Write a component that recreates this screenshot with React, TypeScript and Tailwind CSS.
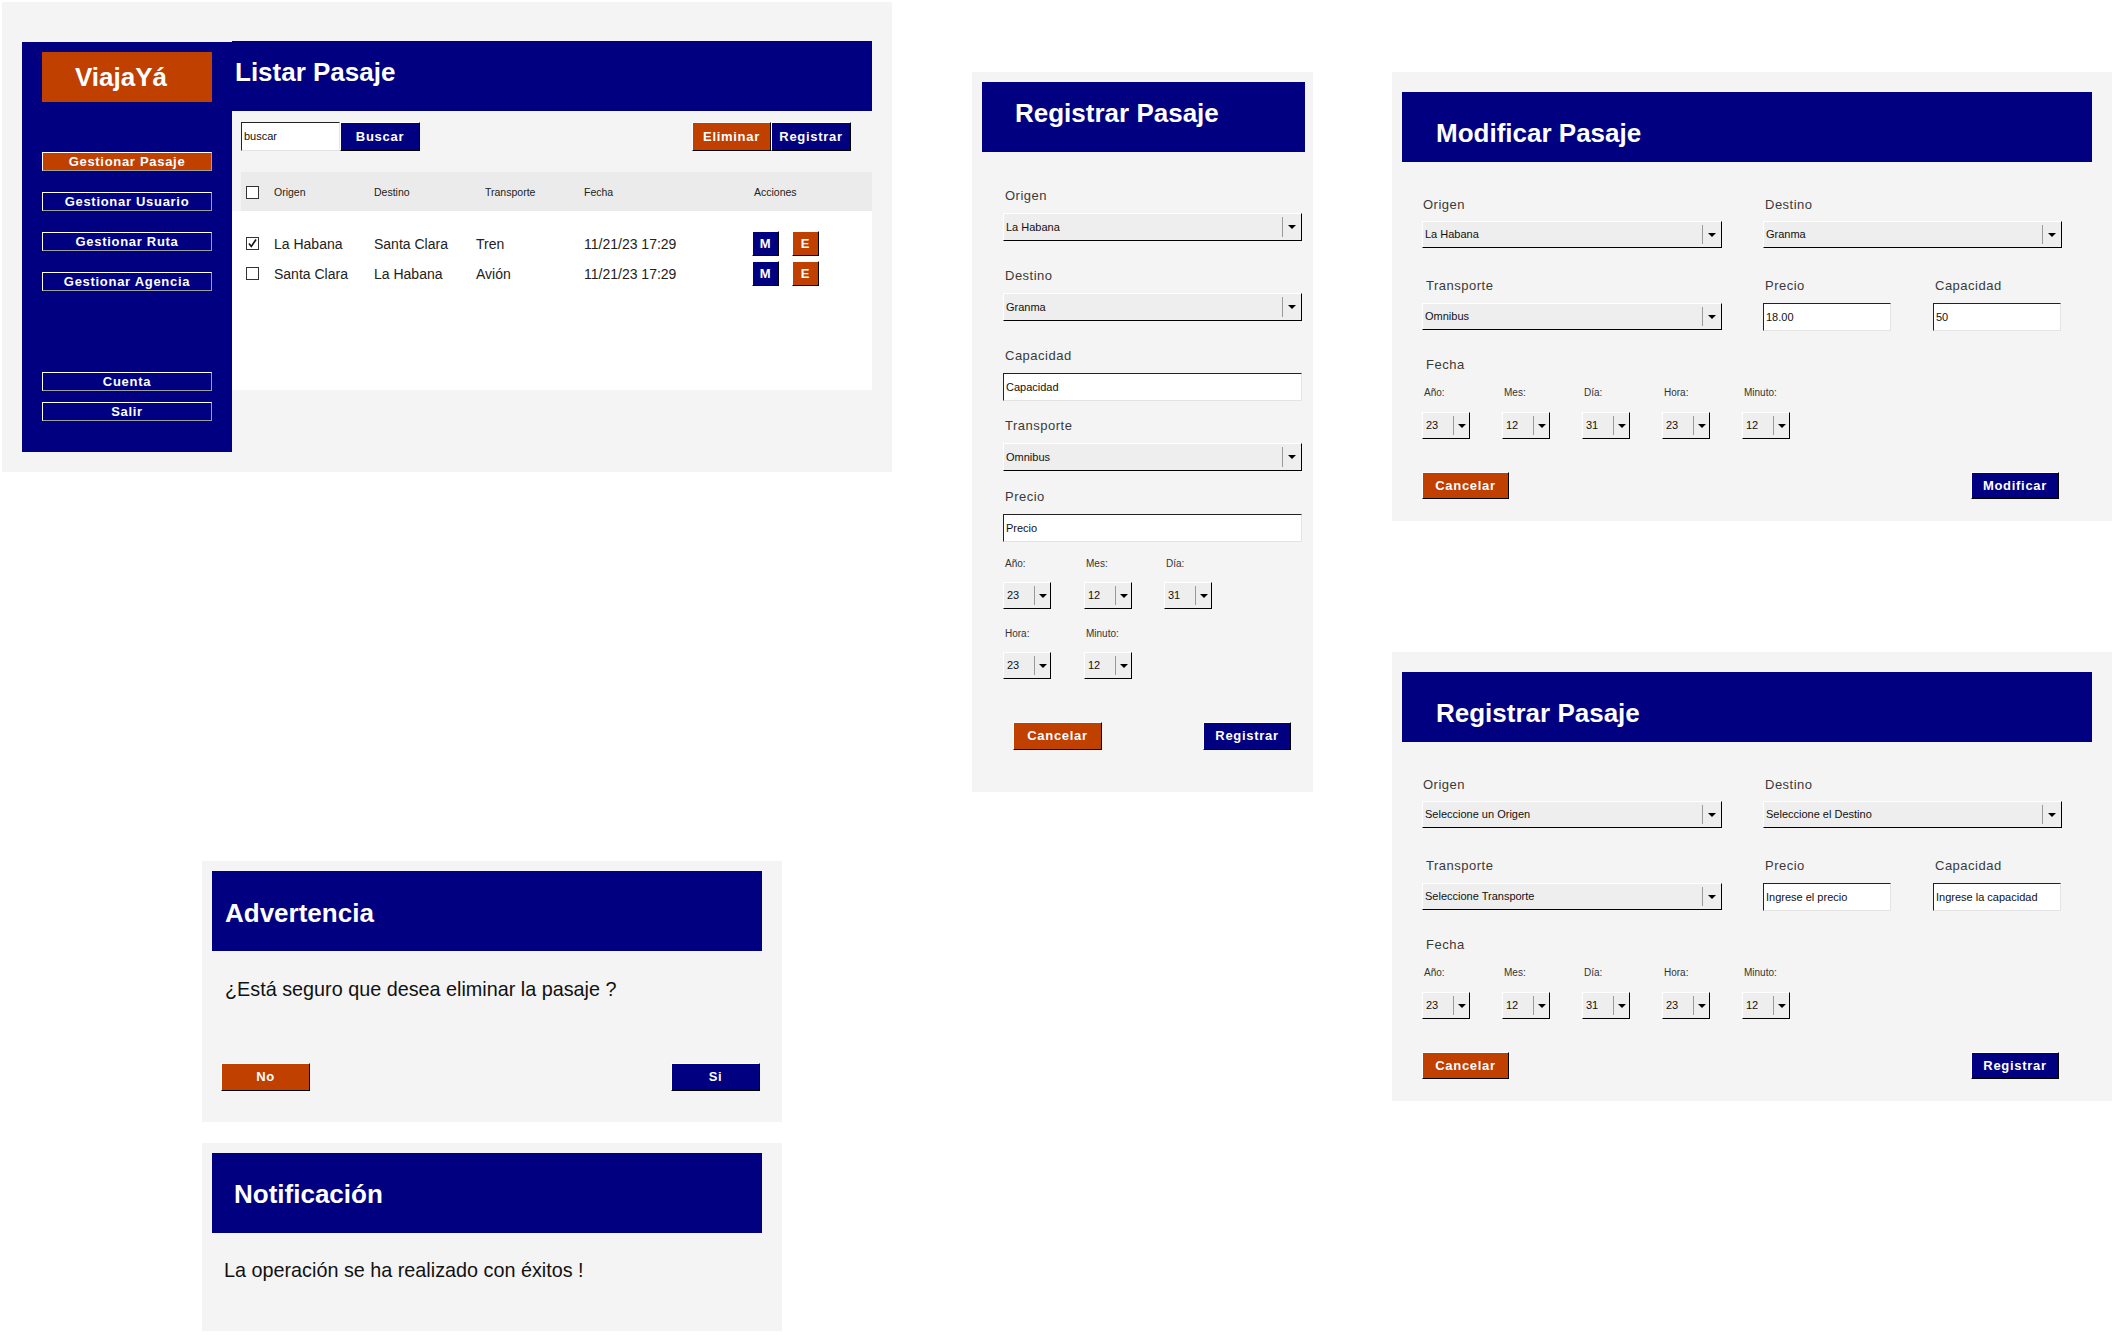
import React from "react";

const FONT = "font-['Liberation_Sans',Arial,sans-serif]";

function Btn({ label, tone, className = "" }: { label: string; tone: "navy" | "orange"; className?: string }) {
  return (
    <div
      className={`flex items-center justify-center border border-t-white border-l-white border-b-black border-r-black text-[13px] font-bold tracking-[0.7px] text-white ${
        tone === "orange" ? "bg-[#c04000]" : "bg-[#000080]"
      } ${className}`}
    >
      {label}
    </div>
  );
}

function NavBtn({ label, active, className = "" }: { label: string; active?: boolean; className?: string }) {
  return (
    <div
      className={`h-[19px] flex items-center justify-center border border-t-white border-l-white border-b-[#a0a0a0] border-r-[#a0a0a0] text-[13px] font-bold tracking-[0.7px] text-white ${
        active ? "bg-[#c04000]" : "bg-[#000080]"
      } ${className}`}
    >
      {label}
    </div>
  );
}

function Arrow() {
  return <span className="w-0 h-0 border-x-[4px] border-x-transparent border-t-[4px] border-t-black" />;
}

function Select({ value, className = "" }: { value: string; className?: string }) {
  return (
    <div className={`flex items-center bg-[#eeeeee] border border-t-white border-l-white border-b-black border-r-black ${className}`}>
      <span className="flex-1 pl-[2px] text-[11px] text-[#111] whitespace-nowrap">{value}</span>
      <span className="w-px h-[76%] bg-[#9a9a9a]" />
      <span className="w-[18px] flex justify-center">
        <Arrow />
      </span>
    </div>
  );
}

function SmallSelect({ value }: { value: string }) {
  return (
    <div className="w-[48px] h-[27px] flex items-center bg-[#eeeeee] border border-t-white border-l-white border-b-black border-r-black">
      <span className="w-[30px] pl-[3px] text-[11px] text-[#111]">{value}</span>
      <span className="w-px h-[78%] bg-[#9a9a9a]" />
      <span className="flex-1 flex justify-center">
        <Arrow />
      </span>
    </div>
  );
}

function Input({ value, className = "" }: { value: string; className?: string }) {
  return (
    <div className={`flex items-center bg-white border border-t-[#222] border-l-[#222] border-b-[#e4e4e4] border-r-[#e4e4e4] ${className}`}>
      <span className="pl-[2px] text-[11px] text-[#111] whitespace-nowrap">{value}</span>
    </div>
  );
}

function Label({ text, className = "" }: { text: string; className?: string }) {
  return <div className={`h-4 leading-4 text-[13px] tracking-[0.5px] text-[#3a3a3a] ${className}`}>{text}</div>;
}

function SmallLabel({ text }: { text: string }) {
  return <div className="h-4 leading-4 text-[10px] text-[#333] pl-[2px]">{text}</div>;
}

function Checkbox({ checked }: { checked?: boolean }) {
  return (
    <span className="w-[13px] h-[13px] border border-[#333] bg-white flex items-center justify-center">
      {checked && (
        <svg width="11" height="11" viewBox="0 0 11 11">
          <path d="M2 5.5 L4.3 8.5 L9 1.5" stroke="#111" strokeWidth="1.6" fill="none" />
        </svg>
      )}
    </span>
  );
}

function ListarPasaje() {
  const rows = [
    { checked: true, o: "La Habana", d: "Santa Clara", t: "Tren", f: "11/21/23 17:29" },
    { checked: false, o: "Santa Clara", d: "La Habana", t: "Avión", f: "11/21/23 17:29" },
  ];
  return (
    <div className="absolute left-[2px] top-[2px] w-[890px] h-[470px] bg-[#f4f4f4] pl-[20px] pt-[39px] flex items-start">
      {/* Sidebar */}
      <aside className="w-[210px] h-[410px] mt-px bg-[#000080] px-5 pt-[10px] flex flex-col">
        <div className="h-[50px] bg-[#c04000] flex items-center justify-center pr-[12px] text-[26px] font-bold text-white">
          ViajaYá
        </div>
        <NavBtn label="Gestionar Pasaje" active className="mt-[50px]" />
        <NavBtn label="Gestionar Usuario" className="mt-[21px]" />
        <NavBtn label="Gestionar Ruta" className="mt-[21px]" />
        <NavBtn label="Gestionar Agencia" className="mt-[21px]" />
        <NavBtn label="Cuenta" className="mt-[81px]" />
        <NavBtn label="Salir" className="mt-[11px]" />
      </aside>

      <div className="w-[640px]">
        <header className="h-[70px] bg-[#000080] flex items-center pl-[3px] pb-[8px] text-[26px] font-bold text-white">
          Listar Pasaje
        </header>

        {/* Toolbar */}
        <div className="h-[61px] flex items-start pt-[11px] pl-[9px] pr-[21px]">
          <Input value="buscar" className="w-[99px] h-[29px]" />
          <Btn label="Buscar" tone="navy" className="w-[80px] h-[29px]" />
          <div className="flex-1" />
          <Btn label="Eliminar" tone="orange" className="w-[79px] h-[29px]" />
          <Btn label="Registrar" tone="navy" className="w-[80px] h-[29px]" />
        </div>

        {/* Table header */}
        <div className="ml-[9px] h-[39px] bg-[#ebebeb] flex items-center pl-[5px] pt-[2px] text-[10.5px] text-[#222]">
          <Checkbox />
          <span className="ml-[15px] w-[100px]">Origen</span>
          <span className="w-[111px]">Destino</span>
          <span className="w-[99px]">Transporte</span>
          <span className="w-[170px]">Fecha</span>
          <span>Acciones</span>
        </div>

        {/* Rows */}
        <div className="h-[179px] bg-white pt-[20px] flex flex-col gap-[5px]">
          {rows.map((r, i) => (
            <div key={i} className="h-[25px] flex items-center pl-[14px] text-[14px] text-[#222]">
              <Checkbox checked={r.checked} />
              <span className="ml-[15px] w-[100px] pt-[2px]">{r.o}</span>
              <span className="w-[102px] pt-[2px]">{r.d}</span>
              <span className="w-[108px] pt-[2px]">{r.t}</span>
              <span className="w-[168px] pt-[2px]">{r.f}</span>
              <Btn label="M" tone="navy" className="w-[27px] h-[25px]" />
              <Btn label="E" tone="orange" className="ml-[13px] w-[27px] h-[25px]" />
            </div>
          ))}
        </div>
      </div>
    </div>
  );
}

function RegistrarVertical() {
  return (
    <div className="absolute left-[972px] top-[72px] w-[341px] h-[720px] bg-[#f4f4f4] pt-[10px] pl-[10px]">
      <header className="w-[323px] h-[70px] bg-[#000080] flex items-center pl-[33px] pb-[8px] text-[26px] font-bold text-white">
        Registrar Pasaje
      </header>
      <div className="pl-[21px] w-[320px]">
        <Label text="Origen" className="mt-[36px] ml-[2px]" />
        <Select value="La Habana" className="mt-[9px] w-[299px] h-[28px]" />
        <Label text="Destino" className="mt-[27px] ml-[2px]" />
        <Select value="Granma" className="mt-[9px] w-[299px] h-[28px]" />
        <Label text="Capacidad" className="mt-[27px] ml-[2px]" />
        <Input value="Capacidad" className="mt-[9px] w-[299px] h-[28px]" />
        <Label text="Transporte" className="mt-[17px] ml-[2px]" />
        <Select value="Omnibus" className="mt-[9px] w-[299px] h-[28px]" />
        <Label text="Precio" className="mt-[18px] ml-[2px]" />
        <Input value="Precio" className="mt-[9px] w-[299px] h-[28px]" />

        <div className="mt-[14px] grid grid-cols-[81px_80px_80px]">
          {[
            ["Año:", "23"],
            ["Mes:", "12"],
            ["Día:", "31"],
          ].map(([l, v]) => (
            <div key={l}>
              <SmallLabel text={l} />
              <div className="mt-[10px]">
                <SmallSelect value={v} />
              </div>
            </div>
          ))}
        </div>
        <div className="mt-[17px] grid grid-cols-[81px_80px_80px]">
          {[
            ["Hora:", "23"],
            ["Minuto:", "12"],
          ].map(([l, v]) => (
            <div key={l}>
              <SmallLabel text={l} />
              <div className="mt-[10px]">
                <SmallSelect value={v} />
              </div>
            </div>
          ))}
        </div>

        <div className="mt-[43px] flex justify-between pl-[10px] pr-[11px] w-[299px]">
          <Btn label="Cancelar" tone="orange" className="w-[89px] h-[28px]" />
          <Btn label="Registrar" tone="navy" className="w-[88px] h-[28px]" />
        </div>
      </div>
    </div>
  );
}

function FormWide({
  top,
  title,
  origen,
  destino,
  transporte,
  precio,
  capacidad,
  action,
}: {
  top: string;
  title: string;
  origen: string;
  destino: string;
  transporte: string;
  precio: string;
  capacidad: string;
  action: string;
}) {
  return (
    <div className={`absolute left-[1392px] ${top} w-[720px] h-[449px] bg-[#f4f4f4] pt-[20px] pl-[10px]`}>
      <header className="w-[690px] h-[70px] bg-[#000080] flex items-center pl-[34px] pt-[12px] text-[26px] font-bold text-white">
        {title}
      </header>
      <div className="ml-[20px]">
        <div className="mt-[35px] flex">
          <div className="w-[341px]">
            <Label text="Origen" className="ml-px" />
            <Select value={origen} className="mt-[8px] w-[300px] h-[27px]" />
          </div>
          <div>
            <Label text="Destino" className="ml-[2px]" />
            <Select value={destino} className="mt-[8px] w-[299px] h-[27px]" />
          </div>
        </div>
        <div className="mt-[30px] flex items-start">
          <div className="w-[341px]">
            <Label text="Transporte" className="ml-[4px]" />
            <Select value={transporte} className="mt-[9px] w-[300px] h-[27px]" />
          </div>
          <div className="w-[170px]">
            <Label text="Precio" className="ml-[2px]" />
            <Input value={precio} className="mt-[9px] w-[128px] h-[28px]" />
          </div>
          <div>
            <Label text="Capacidad" className="ml-[2px]" />
            <Input value={capacidad} className="mt-[9px] w-[128px] h-[28px]" />
          </div>
        </div>
        <Label text="Fecha" className="mt-[26px] ml-[4px]" />
        <div className="mt-[12px] flex">
          {[
            ["Año:", "23"],
            ["Mes:", "12"],
            ["Día:", "31"],
            ["Hora:", "23"],
            ["Minuto:", "12"],
          ].map(([l, v]) => (
            <div key={l} className="w-[80px]">
              <SmallLabel text={l} />
              <div className="mt-[11px]">
                <SmallSelect value={v} />
              </div>
            </div>
          ))}
        </div>
        <div className="mt-[33px] flex justify-between mr-[53px]">
          <Btn label="Cancelar" tone="orange" className="w-[87px] h-[27px]" />
          <Btn label={action} tone="navy" className="w-[88px] h-[27px]" />
        </div>
      </div>
    </div>
  );
}

function Advertencia() {
  return (
    <div className="absolute left-[202px] top-[861px] w-[580px] h-[261px] bg-[#f4f4f4] pt-[10px] pl-[10px]">
      <header className="w-[550px] h-[80px] bg-[#000080] flex items-center pl-[13px] pt-[5px] text-[26px] font-bold text-white">
        Advertencia
      </header>
      <p className="mt-[26px] ml-[13px] leading-6 text-[19.8px] text-[#111]">¿Está seguro que desea eliminar la pasaje ?</p>
      <div className="mt-[62px] flex justify-between ml-[9px] mr-[22px]">
        <Btn label="No" tone="orange" className="w-[89px] h-[28px]" />
        <Btn label="Si" tone="navy" className="w-[89px] h-[28px]" />
      </div>
    </div>
  );
}

function Notificacion() {
  return (
    <div className="absolute left-[202px] top-[1143px] w-[580px] h-[188px] bg-[#f4f4f4] pt-[10px] pl-[10px]">
      <header className="w-[550px] h-[80px] bg-[#000080] flex items-center pl-[22px] pt-[2px] text-[26px] font-bold text-white">
        Notificación
      </header>
      <p className="mt-[25px] ml-[12px] leading-6 text-[19.8px] text-[#111]">La operación se ha realizado con éxitos !</p>
    </div>
  );
}

export default function App() {
  return (
    <div className={`relative w-[2116px] h-[1335px] bg-white overflow-hidden ${FONT}`}>
      <ListarPasaje />
      <RegistrarVertical />
      <FormWide
        top="top-[72px]"
        title="Modificar Pasaje"
        origen="La Habana"
        destino="Granma"
        transporte="Omnibus"
        precio="18.00"
        capacidad="50"
        action="Modificar"
      />
      <FormWide
        top="top-[652px]"
        title="Registrar Pasaje"
        origen="Seleccione un Origen"
        destino="Seleccione el Destino"
        transporte="Seleccione Transporte"
        precio="Ingrese el precio"
        capacidad="Ingrese la capacidad"
        action="Registrar"
      />
      <Advertencia />
      <Notificacion />
    </div>
  );
}
